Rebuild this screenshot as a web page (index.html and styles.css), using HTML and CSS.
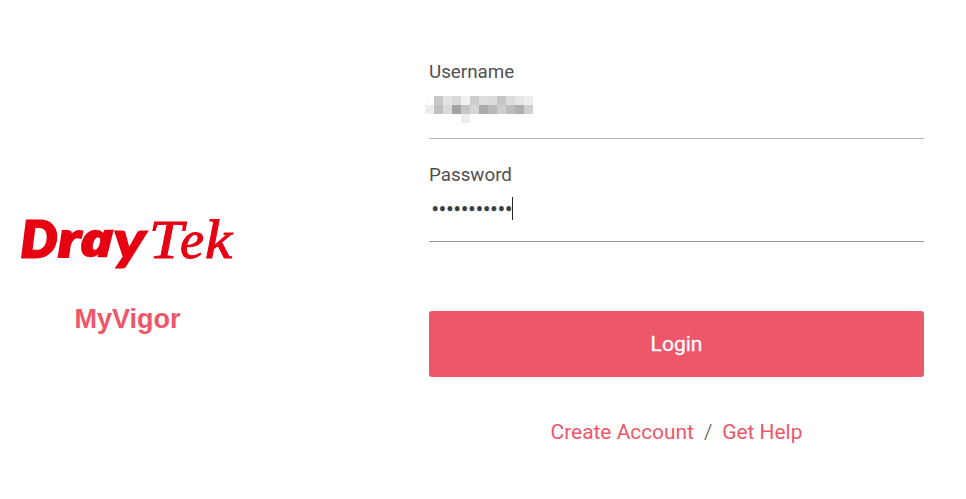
FILE: index.html
```
<!DOCTYPE html>
<html lang="en">
<head>
  <meta charset="utf-8">
  <title>MyVigor</title>
  <link rel="stylesheet" href="styles.css">
</head>
<body>
  <div class="brand">
    <svg class="logo" width="216" height="56" viewBox="0 0 216 56" role="img" aria-label="DrayTek">
      <text class="logo-dray" y="40"><tspan x="0" textLength="36" lengthAdjust="spacingAndGlyphs">D</tspan><tspan class="thin" x="37" textLength="23" lengthAdjust="spacingAndGlyphs">r</tspan><tspan class="round" x="58" textLength="35" lengthAdjust="spacingAndGlyphs">a</tspan><tspan class="tail" x="92" y="42" textLength="33" lengthAdjust="spacingAndGlyphs">y</tspan></text>
      <text class="logo-tek" y="41"><tspan x="128" textLength="34" lengthAdjust="spacingAndGlyphs">T</tspan><tspan x="159">e</tspan><tspan x="184" textLength="27" lengthAdjust="spacingAndGlyphs">k</tspan></text>
    </svg>
    <h1>MyVigor</h1>
  </div>
  <form class="login" onsubmit="return false">
    <div class="field">
      <label for="username">Username</label>
      <div class="value" id="username">
        <svg class="masked" width="108" height="27" viewBox="0 0 12 3" shape-rendering="crispEdges">
          <path fill="#fdfdfd" d="M0 0h1v1H0z"/>
          <path fill="#c8c8c8" d="M1 0h1v1H1z"/>
          <path fill="#e3e3e3" d="M2 0h1v1H2z"/>
          <path fill="#dadada" d="M3 0h1v1H3z"/>
          <path fill="#f0f0f0" d="M4 0h1v1H4z"/>
          <path fill="#cdcdcd" d="M5 0h1v1H5z"/>
          <path fill="#dedede" d="M6 0h1v1H6z"/>
          <path fill="#dcdcdc" d="M7 0h1v1H7z"/>
          <path fill="#c5c5c5" d="M8 0h1v1H8z"/>
          <path fill="#dcdcdc" d="M9 0h1v1H9z"/>
          <path fill="#e6e6e6" d="M10 0h1v1h-1z"/>
          <path fill="#ededed" d="M11 0h1v1h-1zM0 1h1v1H0zM4 2h1v1H4z"/>
          <path fill="#c0c0c0" d="M1 1h1v1H1z"/>
          <path fill="#dadada" d="M2 1h1v1H2z"/>
          <path fill="#a2a2a2" d="M3 1h1v1H3z"/>
          <path fill="#c5c5c5" d="M4 1h1v1H4z"/>
          <path fill="#d6d6d6" d="M5 1h1v1H5z"/>
          <path fill="#aaaaaa" d="M6 1h1v1H6z"/>
          <path fill="#b8b8b8" d="M7 1h1v1H7z"/>
          <path fill="#cecece" d="M8 1h1v1H8z"/>
          <path fill="#bcbcbc" d="M9 1h1v1H9z"/>
          <path fill="#afafaf" d="M10 1h1v1h-1z"/>
          <path fill="#cfcfcf" d="M11 1h1v1h-1z"/>
        </svg>
      </div>
    </div>
    <div class="field focused">
      <label for="password">Password</label>
      <div class="value" id="password">
        <span class="dots">•••••••••••</span><span class="caret"></span>
      </div>
    </div>
    <button class="login-button" type="submit">Login</button>
    <div class="links">
      <a class="create" href="#">Create Account</a>
      <span class="slash">/</span>
      <a class="help" href="#">Get Help</a>
    </div>
  </form>
</body>
</html>
```

FILE: styles.css
```
* {
  box-sizing: border-box;
}

body {
  display: flex;
  margin: 0;
  height: 499px;
  background-color: #fff;
  font-family: Roboto, sans-serif;
  color: #505050;
}

.brand {
  width: 429px;
  padding: 217px 0 0 21px;
}

.logo {
  display: block;
  overflow: visible;
  fill: #e60012;
}

.logo-dray {
  font: italic 900 50px Lato, sans-serif;
  stroke: #e60012;
  stroke-width: 3px;
}

.logo-dray .thin {
  stroke-width: 2px;
}

.logo-dray .round {
  font: italic 800 47px "Open Sans", sans-serif;
  stroke-width: 0.5px;
}

.logo-dray .tail {
  font-size: 54px;
  stroke-width: 1px;
}

.logo-tek {
  font: italic 400 54px "Liberation Serif", serif;
  stroke: #e60012;
  stroke-width: 1px;
}

h1 {
  width: 213px;
  margin: 30px 0 0;
  font: bold 27px/32px "Liberation Sans", Arial, sans-serif;
  text-align: center;
  color: #ee566a;
}

.login {
  width: 495px;
  padding-top: 60px;
}

.field {
  height: 79px;
  margin-bottom: 24px;
  border-bottom: 1px solid #b5b5b5;
}

.focused {
  border-color: #949494;
}

label {
  display: block;
  font-size: 18.8px;
  line-height: 24px;
}

.value {
  display: flex;
  align-items: center;
  height: 50px;
}

.focused .value {
  height: 42px;
}

.masked {
  margin: 0 0 0 -4px;
}

.dots {
  padding: 3px 0 0 2.5px;
  font-size: 21.8px;
  line-height: 24px;
  color: #373d42;
  -webkit-text-stroke: 0.4px #373d42;
}

.caret {
  width: 1px;
  height: 23px;
  background-color: #22282c;
}

.login-button {
  display: block;
  width: 100%;
  height: 66px;
  margin-top: 69px;
  border: none;
  border-radius: 3px;
  background-color: #ee566a;
  font: 400 21px Roboto, sans-serif;
  color: #fff;
  -webkit-text-stroke: 0.3px #fff;
}

.links {
  display: flex;
  justify-content: center;
  gap: 10px;
  margin-top: 42px;
  font-size: 20.9px;
  line-height: 26px;
}

.links a {
  color: #ee566a;
  text-decoration: none;
}

.slash {
  font-weight: 300;
}
```
